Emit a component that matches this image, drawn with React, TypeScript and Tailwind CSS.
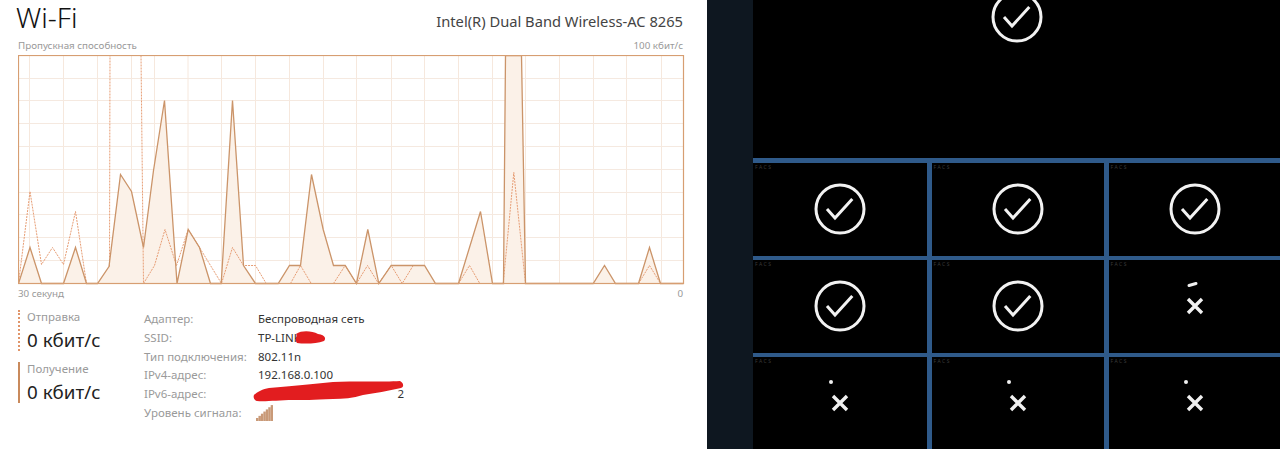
import React from "react";

const solid: [number, number][] = [[18,283],[29.5,247],[41,283],[63,283],[75,247],[86,283],[97,283],[108.5,266],[120,174],[131,191],[143,247],[153,170],[164,100],[176.5,283],[187.7,229],[199,247],[210,283],[220.7,283],[232,100],[243,265],[255,283],[277.7,283],[289,265],[300,265],[311,174],[322.7,229],[333,265],[344.7,265],[356,283],[367.3,229],[378.3,283],[390.7,265],[412.7,265],[424,265],[435,283],[458,283],[480,211],[492,283],[503,283],[505,55],[521,55],[525,283],[592.7,283],[604,265],[615,283],[638,283],[649,247],[660,283],[683,283]];
const dashedRuns: [number, number][][] = [
  [[18,283],[29.5,191],[41,264],[52,247],[63,264],[75,211],[86,283]],
  [[109,266],[109.5,55]],
  [[140.5,55],[143,283],[154,265],[164.5,229],[176,265],[187.7,229],[199,247],[221,283],[232,247],[243,265],[255,265],[265.7,283]],
  [[290,283],[300,265],[310.7,283]],
  [[333,283],[344.7,265],[356,283],[367,265],[378,283],[390.7,265],[401.7,283],[412.7,265],[424,265]],
  [[458,283],[469,265],[479.3,283]],
  [[502.7,283],[513.3,172],[525,283]],
  [[638,283],[649,265],[660,283]],
];
const vLines = [29,63,97,131,154,187.5,221,255,289,323,356,391,424,458,492,525,559,593,626,661];
const hLines = [78,100,123,146,169,192,214,237,260];
const pts = (a: [number, number][], ox = 18, oy = 55) => a.map(([x, y]) => `${x - ox},${y - oy}`).join(" ");

function Chart() {
  return (
    <svg width="667" height="230" viewBox="-0.5 -0.5 667 230" className="block">
      {vLines.map((x) => <line key={x} x1={x - 18} x2={x - 18} y1={0} y2={228} stroke="#f6e8dd" strokeWidth="1" />)}
      {hLines.map((y) => <line key={y} x1={0} x2={665} y1={y - 55} y2={y - 55} stroke="#f5e9e0" strokeWidth="1" />)}
      <polygon points={pts(solid)} fill="#fbf1e8" />
      {dashedRuns.map((r, i) => (
        <polyline key={i} points={pts(r)} fill="none" stroke="#e79d74" strokeWidth="1" strokeDasharray="2 1" />
      ))}
      <polyline points={pts(solid)} fill="none" stroke="#cb9469" strokeWidth="1.3" />
      <rect x="0" y="0" width="665" height="228" fill="none" stroke="#d79e72" strokeWidth="1.2" />
    </svg>
  );
}

function Stat({ label, dashedBar }: { label: string; dashedBar?: boolean }) {
  return (
    <div className={`pl-[7px] h-[41px] border-l-[2px] flex flex-col ${dashedBar ? "border-dotted border-[#e0956a]" : "border-solid border-[#c98a5c]"}`}>
      <div className="text-[11.5px] leading-[14px] text-[#9a9a9a]">{label}</div>
      <div className="text-[18.8px] leading-[27px] mt-[3px] text-[#222] whitespace-nowrap">0 кбит/с</div>
    </div>
  );
}

const labels = ["Адаптер:", "SSID:", "Тип подключения:", "IPv4-адрес:", "IPv6-адрес:", "Уровень сигнала:"];

function SignalIcon() {
  return (
    <svg width="17" height="16" viewBox="0 0 17 16" className="block">
      {[0, 1, 2, 3, 4, 5, 6].map((i) => (
        <rect key={i} x={i * 2.45} y={13 - i * 2.15} width="2.45" height={3 + i * 2.15} fill="#c99a78" />
      ))}
    </svg>
  );
}

function Values() {
  return (
    <div className="relative flex flex-col text-[11.5px] leading-[18.8px] text-[#333]">
      <div>Беспроводная сеть</div>
      <div className="relative h-[18.8px]">
        TP-LINK
        <svg width="40" height="18" className="absolute left-[34px] top-0">
          <path d="M4 5 C10 1 20 2 26 5 C34 6 34 10 32 12 C24 15 12 15 5 14 C2 10 6 7 4 5 Z" fill="#e21d1f" />
        </svg>
      </div>
      <div>802.11n</div>
      <div>192.168.0.100</div>
      <div className="relative h-[18.8px] w-[146px] text-right">
        2
        <svg width="152" height="24" className="absolute left-[-5px] top-[-5px]">
          <path d="M1 15 C4 12 10 9 16 8 C40 6 60 4 80 2 C100 1 130 2 147 1 C151 3 151 7 148 8 C135 11 122 13 110 15 C100 18 90 19 80 19 C60 20 50 20 40 20 C25 20 12 22 4 21 C1 20 0 17 1 15 Z" fill="#e21d1f" />
        </svg>
      </div>
      <div className="h-[18.8px] pt-[1px] -ml-[2px]"><SignalIcon /></div>
    </div>
  );
}

function Check() {
  return (
    <svg width="54" height="54" viewBox="-27 -27 54 54" className="block">
      <circle r="24" fill="none" stroke="#f2f2f2" strokeWidth="3" />
      <path d="M-13 0 L-5 9 L12.3 -10" fill="none" stroke="#f2f2f2" strokeWidth="3" />
    </svg>
  );
}

function Cross({ dash }: { dash?: boolean }) {
  return (
    <svg width="60" height="60" viewBox="0 0 60 60" className="block">
      <path d="M23 23 L37 37 M37 23 L23 37" stroke="#f0f0f0" strokeWidth="3.4" />
      {dash ? (
        <path d="M24 9.5 L31 7.5" stroke="#f0f0f0" strokeWidth="3" strokeLinecap="round" />
      ) : (
        <circle cx="21" cy="9" r="2" fill="#f0f0f0" />
      )}
    </svg>
  );
}

function Cell({ children }: { children: React.ReactNode }) {
  return (
    <div className="relative bg-black flex items-center justify-center">
      <span className="absolute left-[2px] top-[1px] text-[5px] leading-[6px] tracking-[1.5px] text-[#3a3a3a]">FACS</span>
      {children}
    </div>
  );
}

export default function App() {
  return (
    <div className="w-[1280px] h-[449px] overflow-hidden flex" style={{ fontFamily: '"Noto Sans", "Open Sans", sans-serif' }}>
      <div className="w-[707px] shrink-0 bg-white pl-[18px] pr-[24px] flex flex-col">
        <div className="flex justify-between items-start h-[39px] -ml-[2px]">
          <div className="text-[28px] leading-[34px] font-light text-[#111]">Wi-Fi</div>
          <div className="text-[14.7px] leading-[20px] pt-[11px] text-[#444]">Intel(R) Dual Band Wireless-AC 8265</div>
        </div>
        <div className="flex justify-between text-[9.8px] leading-[14px] h-[16px] text-[#999]">
          <span>Пропускная способность</span>
          <span>100 кбит/с</span>
        </div>
        <Chart />
        <div className="flex justify-between text-[9.8px] leading-[14px] text-[#999] mt-[2px]">
          <span>30 секунд</span>
          <span>0</span>
        </div>
        <div className="flex mt-[9px]">
          <div className="w-[126px] flex flex-col gap-[11px]">
            <Stat label="Отправка" dashedBar />
            <Stat label="Получение" />
          </div>
          <div className="w-[114px] flex flex-col text-[11.5px] leading-[18.8px] text-[#9a9a9a]">
            {labels.map((l) => <div key={l}>{l}</div>)}
          </div>
          <Values />
        </div>
      </div>
      <div className="w-[46px] shrink-0 bg-[#0e1720]" />
      <div className="flex-1 bg-[#2f5a8a] grid grid-cols-[174px_172.5px_172px] grid-rows-[158px_93px_92.5px_92px] gap-[4.5px]">
        <div className="col-span-3 bg-black flex justify-center items-start overflow-hidden">
          <div className="-mt-[10px]"><Check /></div>
        </div>
        <Cell><Check /></Cell>
        <Cell><Check /></Cell>
        <Cell><Check /></Cell>
        <Cell><Check /></Cell>
        <Cell><Check /></Cell>
        <Cell><Cross dash /></Cell>
        <Cell><Cross /></Cell>
        <Cell><Cross /></Cell>
        <Cell><Cross /></Cell>
      </div>
    </div>
  );
}
